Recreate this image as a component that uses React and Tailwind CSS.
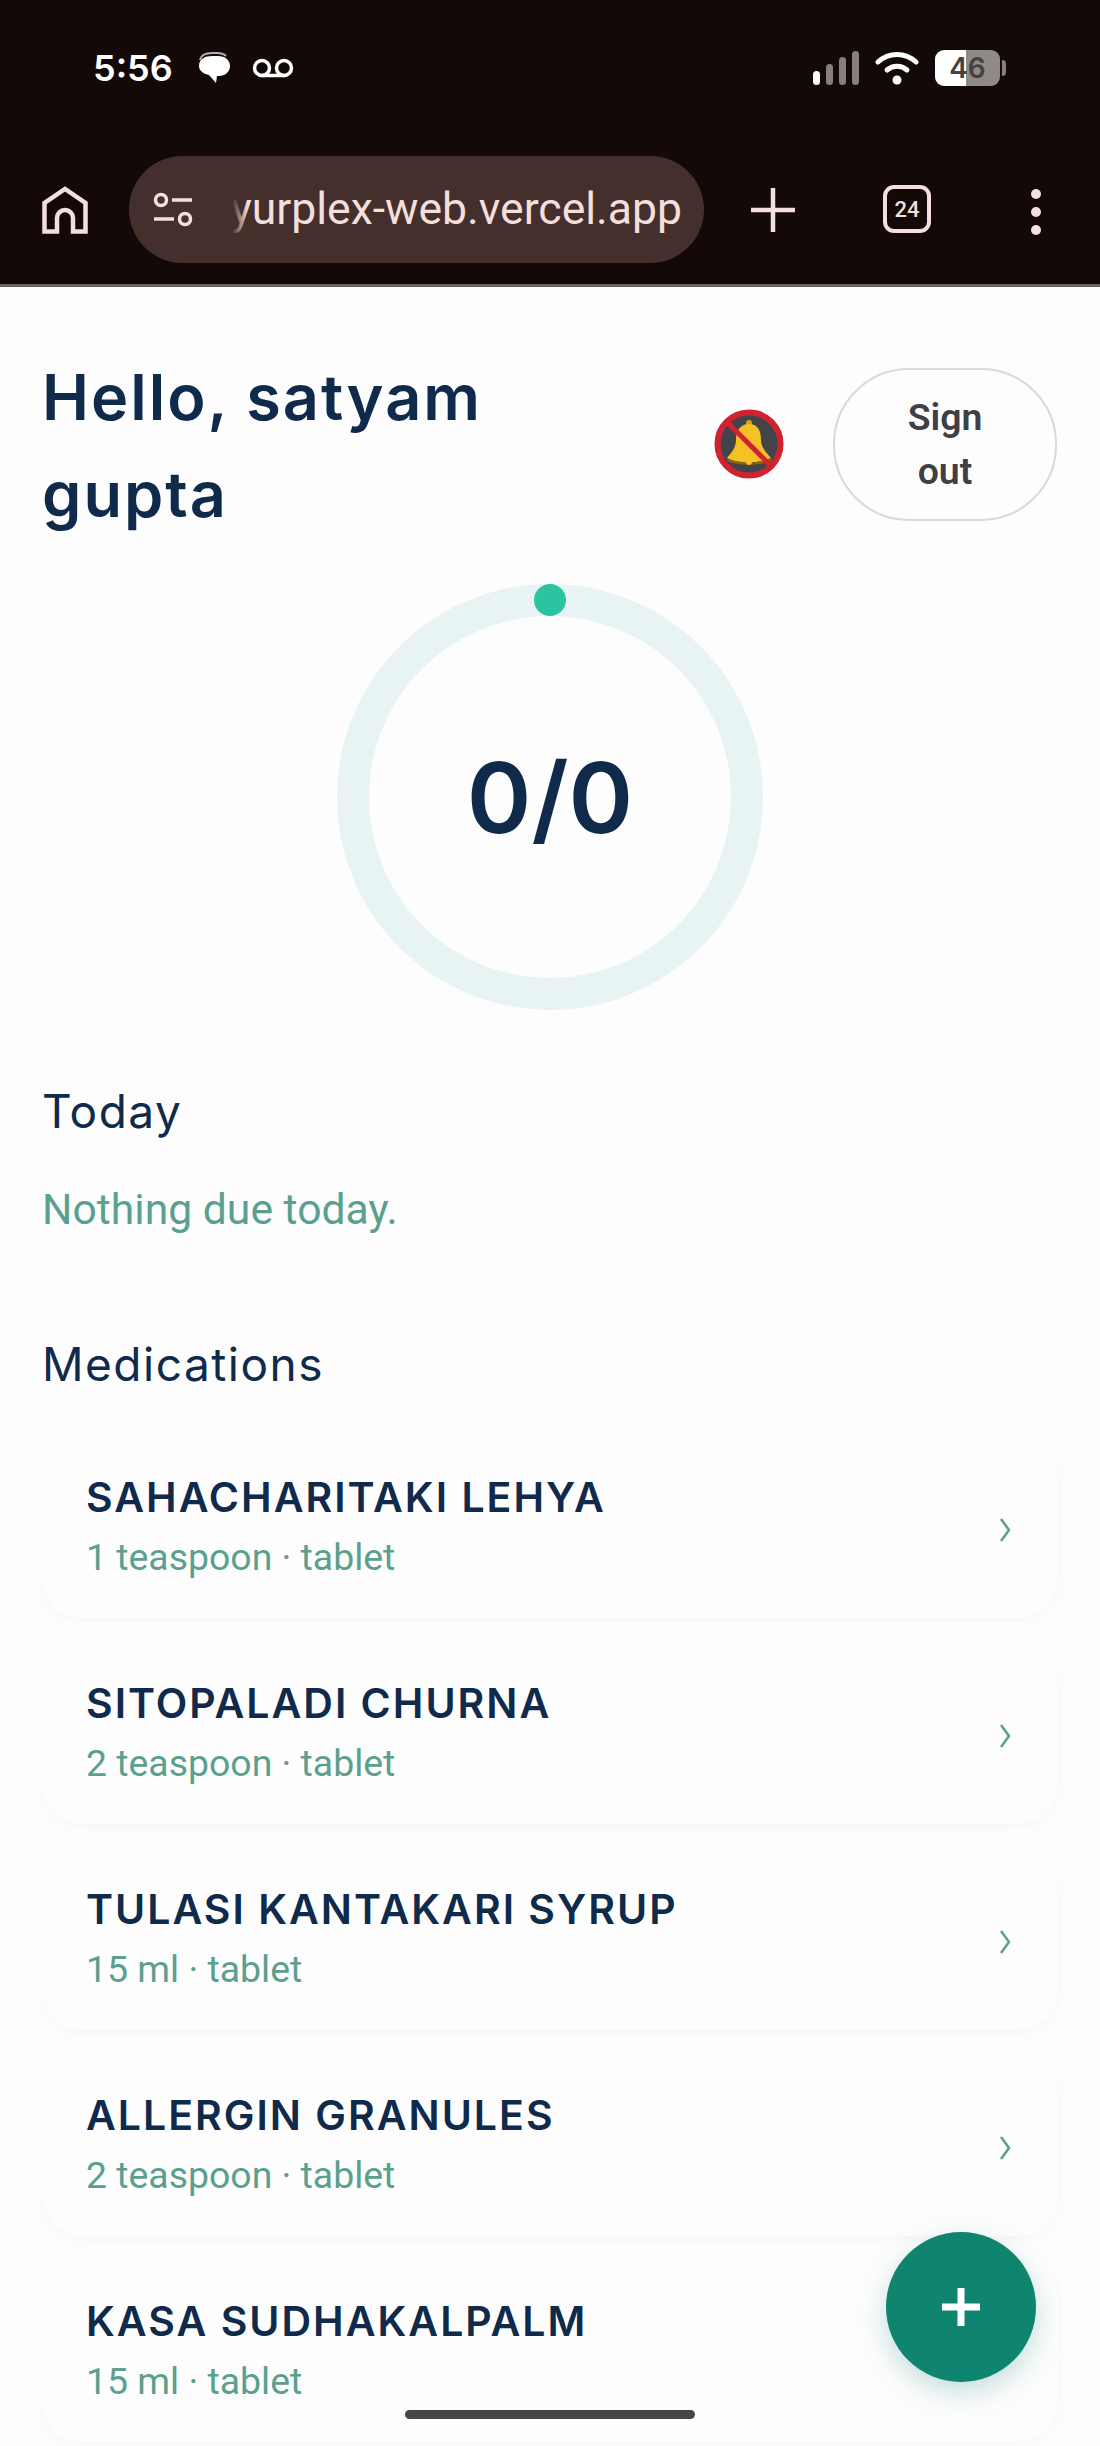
import React from 'react';

const meds = [
  { name: 'SAHACHARITAKI LEHYA', detail: '1 teaspoon · tablet' },
  { name: 'SITOPALADI CHURNA', detail: '2 teaspoon · tablet' },
  { name: 'TULASI KANTAKARI SYRUP', detail: '15 ml · tablet' },
  { name: 'ALLERGIN GRANULES', detail: '2 teaspoon · tablet' },
  { name: 'KASA SUDHAKALPALM', detail: '15 ml · tablet' },
];

function StatusBar() {
  return (
    <div className="flex h-[136px] items-start justify-between pl-[93px] pr-[94px] pt-[50px]">
      <div className="flex items-center">
        <span className="w-[104px] font-['Inter'] text-[36px] leading-[36px] font-semibold text-white">5:56</span>
        <svg width="34" height="32" viewBox="0 0 34 32" className="mr-[21px]">
          <path d="M3 8C4 3 9 1 15 1h5c4 0 7 1 9 3" fill="none" stroke="#b5b0ae" strokeWidth="2" />
          <path d="M2 14C2 7 8 4 15 4h6c7 0 12 4 12 10s-5 10-11 10h-2l-1 7-7-8C7 22 2 19 2 14z" fill="#fff" />
        </svg>
        <svg width="42" height="20" viewBox="0 0 42 20" fill="none" stroke="#fff" strokeWidth="3.5">
          <circle cx="10" cy="10" r="7.5" />
          <circle cx="32" cy="10" r="7.5" />
          <path d="M10 17.5h22" />
        </svg>
      </div>
      <div className="flex items-center">
        <div className="mr-[16px] flex h-[34px] items-end gap-[6px]">
          <div className="h-[14px] w-[7px] rounded-full bg-white" />
          <div className="h-[21px] w-[7px] rounded-full bg-[#857f7d]" />
          <div className="h-[28px] w-[7px] rounded-full bg-[#857f7d]" />
          <div className="h-[34px] w-[7px] rounded-full bg-[#857f7d]" />
        </div>
        <svg width="44" height="34" viewBox="0 0 44 34" fill="none" stroke="#fff" strokeWidth="5" strokeLinecap="round" className="mr-[16px]">
          <path d="M3 11C14 1 30 1 41 11" />
          <path d="M12 19c6-5 14-5 20 0" />
          <circle cx="22" cy="29" r="4.5" fill="#fff" stroke="none" />
        </svg>
        <div className="relative flex h-[36px] w-[65px] items-center justify-center overflow-hidden rounded-[9px] bg-[linear-gradient(90deg,#ffffff_0,#ffffff_31px,#8f8987_31px,#8f8987_100%)]">
          <span className="font-['Inter'] text-[28px] leading-none font-semibold text-[#45413f]">46</span>
        </div>
        <div className="ml-[2px] h-[16px] w-[4px] rounded-r bg-[#857f7d]" />
      </div>
    </div>
  );
}

function Toolbar() {
  return (
    <div className="flex h-[151px] items-start border-b-[3px] border-[#6b6462] pt-[20px]">
      <svg width="46" height="48" viewBox="0 0 46 48" fill="none" stroke="#f3dfdb" strokeWidth="4.5" className="ml-[42px] mr-[41px] mt-[30px]">
        <path d="M2.5 45.5V17L23 3l20.5 14v28.5H31V32a8 8 0 0 0-16 0v13.5z" />
      </svg>
      <div className="relative flex h-[107px] w-[575px] items-center overflow-hidden rounded-full bg-[#442f2d]">
        <svg width="42" height="36" viewBox="0 0 42 36" fill="none" stroke="#f3dfdb" strokeWidth="3.5" className="absolute left-[23px] top-[36px]">
          <circle cx="9" cy="8" r="5.5" />
          <path d="M20 8h20M2 27h20" />
          <circle cx="33" cy="27" r="5.5" />
        </svg>
        <div className="absolute right-[22px] top-0 flex h-full w-[460px] items-center justify-end overflow-hidden">
          <span className="font-['Roboto'] text-[44.5px] whitespace-nowrap text-[#f3dfdb]">ayurplex-web.vercel.app</span>
          <div className="absolute left-0 top-0 h-full w-[26px] bg-gradient-to-r from-[#442f2d] from-40% to-transparent" />
        </div>
      </div>
      <svg width="46" height="46" viewBox="0 0 46 46" stroke="#f3dfdb" strokeWidth="4.5" className="ml-[46px] mt-[31px]">
        <path d="M23 1v44M1 23h44" />
      </svg>
      <div className="ml-[87px] mt-[29px] flex h-[48px] w-[48px] items-center justify-center rounded-[11px] border-[4px] border-[#f3dfdb] font-['Roboto'] text-[22px] font-medium text-[#f3dfdb]">
        24
      </div>
      <div className="ml-[100px] mt-[33px] flex flex-col gap-[8px]">
        <div className="h-[10px] w-[10px] rounded-full bg-[#f3dfdb]" />
        <div className="h-[10px] w-[10px] rounded-full bg-[#f3dfdb]" />
        <div className="h-[10px] w-[10px] rounded-full bg-[#f3dfdb]" />
      </div>
    </div>
  );
}

function BellOff() {
  return (
    <svg width="72" height="72" viewBox="0 0 72 72">
      <circle cx="36" cy="36" r="31.5" fill="#43434a" stroke="#d1232f" strokeWidth="6" />
      <circle cx="36" cy="15" r="3" fill="#d9a114" />
      <path d="M36 16c-9 0-13 7-13 16 0 8-5 13-9 18 11 6 32 6 44 0-4-5-10-10-10-18 0-9-3-16-12-16z" fill="#f5c125" />
      <path d="M14 50c11 6 32 6 44 0l1 3c-13 5-32 5-45 0z" fill="#8a6410" />
      <circle cx="36" cy="54" r="3" fill="#f5c125" />
      <path d="M14 14l44 44" stroke="#d1232f" strokeWidth="5" />
    </svg>
  );
}

function Ring() {
  return (
    <div className="relative mx-auto mt-[41px] flex h-[426px] w-[426px] items-center justify-center rounded-full border-[32px] border-[#e8f3f4]">
      <span className="font-['Inter'] text-[98px] font-semibold text-[#0f2a4a]">0/0</span>
      <div className="absolute left-1/2 top-[-32px] h-[32px] w-[32px] -translate-x-1/2 rounded-full bg-[#2bc4a0]" />
    </div>
  );
}

function MedCard({ name, detail }) {
  return (
    <div className="flex h-[182px] shrink-0 items-center justify-between rounded-[40px] bg-[#fefdfe] pl-[44px] pr-[47px] shadow-[0_4px_10px_rgba(40,40,90,0.03)]">
      <div>
        <div className="font-['Inter'] text-[41px] leading-[48px] font-semibold tracking-[2px] text-[#0f2a4a]">{name}</div>
        <div className="mt-[12px] font-['Roboto'] text-[37.4px] leading-[48px] text-[#5ba08e]">{detail}</div>
      </div>
      <svg width="12" height="24" viewBox="0 0 12 24" fill="none" stroke="#5ba08e" strokeWidth="2.5" className="mt-[5px]">
        <path d="M2 1l8 11-8 11" />
      </svg>
    </div>
  );
}

export default function App() {
  return (
    <div className="relative h-[2446px] w-[1100px] overflow-hidden bg-[#fefdfe]">
      <div className="bg-[#120908]">
        <StatusBar />
        <Toolbar />
      </div>

      <div className="px-[42px]">
        <div className="flex items-center pt-[58px]">
          <h1 className="mt-[4px] w-[642px] font-['Inter'] text-[63px] leading-[97px] font-semibold tracking-[2px] text-[#0f2a4a]">
            Hello, satyam<br />gupta
          </h1>
          <div className="ml-[29px]">
            <BellOff />
          </div>
          <button className="ml-[48px] h-[153px] w-[224px] rounded-[76px] border-2 border-[#d9d8da] font-['Roboto'] text-[37.4px] leading-[54px] font-semibold text-[#3f3f46]">
            Sign<br />out
          </button>
        </div>

        <Ring />

        <h2 className="mt-[71px] font-['Inter'] text-[46px] leading-[60px] tracking-[1.5px] text-[#0f2a4a]">Today</h2>
        <p className="mt-[40px] font-['Roboto'] text-[42.7px] leading-[56px] text-[#5ba08e]">Nothing due today.</p>
        <h2 className="mt-[97px] font-['Inter'] text-[46px] leading-[60px] tracking-[1.5px] text-[#0f2a4a]">Medications</h2>

        <div className="mt-[42px] flex flex-col gap-[24px]">
          {meds.map((m) => (
            <MedCard key={m.name} name={m.name} detail={m.detail} />
          ))}
        </div>
      </div>

      {/* floating add button */}
      <button className="absolute left-[886px] top-[2232px] flex h-[150px] w-[150px] items-center justify-center rounded-full bg-[#0f8570] shadow-[0_10px_28px_rgba(15,133,112,0.25)]">
        <svg width="40" height="40" viewBox="0 0 40 40" stroke="#fff" strokeWidth="7">
          <path d="M20 1v38M1 20h38" />
        </svg>
      </button>

      {/* home indicator */}
      <div className="absolute left-[405px] top-[2410px] h-[9px] w-[290px] rounded-full bg-[#46454a]" />
    </div>
  );
}
